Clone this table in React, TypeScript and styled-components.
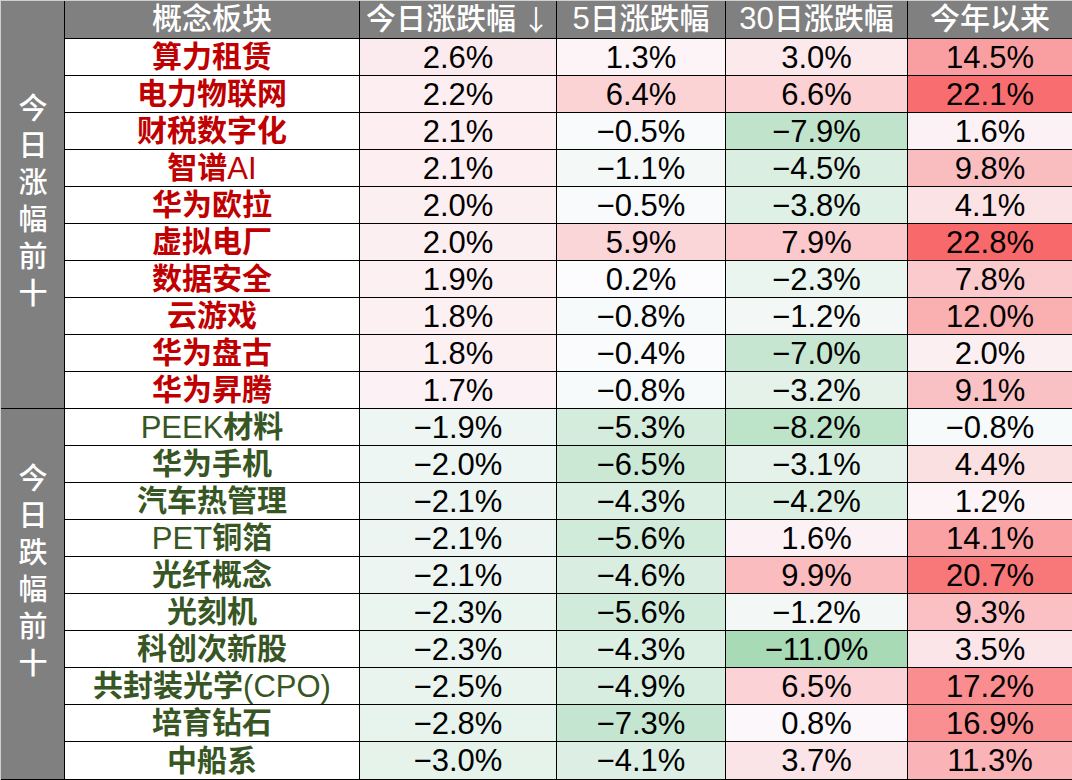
import React from 'react'
import styled, { createGlobalStyle } from 'styled-components'

const GlobalStyle = createGlobalStyle`
  html, body {
    margin: 0;
    padding: 0;
    background: #ffffff;
  }
`

const FONT = '"Liberation Sans", "Noto Sans CJK SC", sans-serif'
const GRID = '#000000'
const SIDE = '#808080'

type Row = { name: string; values: number[] }

const gainers: Row[] = [
  { name: '算力租赁', values: [2.6, 1.3, 3.0, 14.5] },
  { name: '电力物联网', values: [2.2, 6.4, 6.6, 22.1] },
  { name: '财税数字化', values: [2.1, -0.5, -7.9, 1.6] },
  { name: '智谱AI', values: [2.1, -1.1, -4.5, 9.8] },
  { name: '华为欧拉', values: [2.0, -0.5, -3.8, 4.1] },
  { name: '虚拟电厂', values: [2.0, 5.9, 7.9, 22.8] },
  { name: '数据安全', values: [1.9, 0.2, -2.3, 7.8] },
  { name: '云游戏', values: [1.8, -0.8, -1.2, 12.0] },
  { name: '华为盘古', values: [1.8, -0.4, -7.0, 2.0] },
  { name: '华为昇腾', values: [1.7, -0.8, -3.2, 9.1] },
]

const losers: Row[] = [
  { name: 'PEEK材料', values: [-1.9, -5.3, -8.2, -0.8] },
  { name: '华为手机', values: [-2.0, -6.5, -3.1, 4.4] },
  { name: '汽车热管理', values: [-2.1, -4.3, -4.2, 1.2] },
  { name: 'PET铜箔', values: [-2.1, -5.6, 1.6, 14.1] },
  { name: '光纤概念', values: [-2.1, -4.6, 9.9, 20.7] },
  { name: '光刻机', values: [-2.3, -5.6, -1.2, 9.3] },
  { name: '科创次新股', values: [-2.3, -4.3, -11.0, 3.5] },
  { name: '共封装光学(CPO)', values: [-2.5, -4.9, 6.5, 17.2] },
  { name: '培育钻石', values: [-2.8, -7.3, 0.8, 16.9] },
  { name: '中船系', values: [-3.0, -4.1, 3.7, 11.3] },
]

const headers = ['概念板块', '今日涨跌幅', '5日涨跌幅', '30日涨跌幅', '今年以来']

// excel style 3-colour scale: green -> white -> red
const MID = [252, 252, 255]
const RED = [248, 105, 107]
const GREEN = [99, 190, 123]

function scale(v: number) {
  const to = v >= 0 ? RED : GREEN
  const t = Math.min(1, v >= 0 ? v / 22.8 : -v / 20)
  const c = MID.map((m, i) => Math.round(m + (to[i] - m) * t))
  return `rgb(${c[0]}, ${c[1]}, ${c[2]})`
}

const fmt = (v: number) => (v < 0 ? '\u2212' : '') + Math.abs(v).toFixed(1) + '%'

const Sheet = styled.div`
  width: 1072px;
  height: 780px;
  box-sizing: border-box;
  border-top: 1px solid #d0d0d0;
  border-left: 1px solid #d0d0d0;
  display: grid;
  grid-template-columns: 64px 295px 197px 169px 182px 164px;
  grid-template-rows: 38px repeat(19, 37px) 38px;
  font-family: ${FONT};
  overflow: hidden;
`

const Cell = styled.div<{ $last?: boolean }>`
  box-sizing: border-box;
  display: flex;
  align-items: center;
  justify-content: center;
  border-bottom: 1px solid ${GRID};
  border-right: ${({ $last }) => ($last ? 'none' : `1px solid ${GRID}`)};
  line-height: 1;
  white-space: nowrap;
`

const Corner = styled.div`
  grid-column: 1;
  grid-row: 1;
  background: ${SIDE};
  border-right: 1px solid ${GRID};
`

const GroupLabel = styled(Cell)<{ $start: number }>`
  grid-column: 1;
  grid-row: ${({ $start }) => `${$start} / span 10`};
  background: ${SIDE};
  color: #ffffff;
  padding-bottom: 40px;
`

const VerticalText = styled.span`
  writing-mode: vertical-rl;
  text-orientation: upright;
  font-size: 29px;
  font-weight: 500;
  letter-spacing: 8px;
  font-family: "Noto Sans CJK SC", sans-serif;
`

const HeaderCell = styled(Cell)`
  grid-row: 1;
  background: ${SIDE};
  color: #ffffff;
  font-size: 30px;
  font-weight: 500;
  padding-bottom: 2px;
`

const SortArrow = styled.span`
  font-family: "Noto Sans CJK SC", sans-serif;
  font-weight: 400;
  font-size: 28px;
  margin-left: 6px;
`

const NameCell = styled(Cell)<{ $tone: 'up' | 'down' }>`
  background: #ffffff;
  color: ${({ $tone }) => ($tone === 'up' ? '#c00000' : '#375623')};
  font-size: 30px;
  font-weight: 700;
`

const ValueCell = styled(Cell)<{ $bg: string }>`
  background: ${({ $bg }) => $bg};
  color: #000000;
  font-size: 31px;
  font-weight: 400;
`

const Latin = styled.span`
  font-family: "Liberation Sans", sans-serif;
  font-weight: 400;
  font-size: 31px;
`

function Mixed({ text }: { text: string }) {
  const parts = text.split(/([A-Za-z0-9()]+)/).filter(Boolean)
  return (
    <>
      {parts.map((p, i) => (/^[A-Za-z0-9()]+$/.test(p) ? <Latin key={i}>{p}</Latin> : <span key={i}>{p}</span>))}
    </>
  )
}

function Rows({ rows, tone }: { rows: Row[]; tone: 'up' | 'down' }) {
  return (
    <>
      {rows.map((r) => (
        <React.Fragment key={r.name}>
          <NameCell $tone={tone}>
            <Mixed text={r.name} />
          </NameCell>
          {r.values.map((v, i) => (
            <ValueCell key={i} $bg={scale(v)} $last={i === r.values.length - 1}>
              {fmt(v)}
            </ValueCell>
          ))}
        </React.Fragment>
      ))}
    </>
  )
}

export default function App() {
  return (
    <>
      <GlobalStyle />
      <Sheet>
        <Corner />
        {headers.map((h, i) => (
          <HeaderCell key={h} $last={i === headers.length - 1}>
            <Mixed text={h} />
            {i === 1 && <SortArrow>↓</SortArrow>}
          </HeaderCell>
        ))}
        <GroupLabel $start={2}>
          <VerticalText>今日涨幅前十</VerticalText>
        </GroupLabel>
        <Rows rows={gainers} tone="up" />
        <GroupLabel $start={12}>
          <VerticalText>今日跌幅前十</VerticalText>
        </GroupLabel>
        <Rows rows={losers} tone="down" />
      </Sheet>
    </>
  )
}
